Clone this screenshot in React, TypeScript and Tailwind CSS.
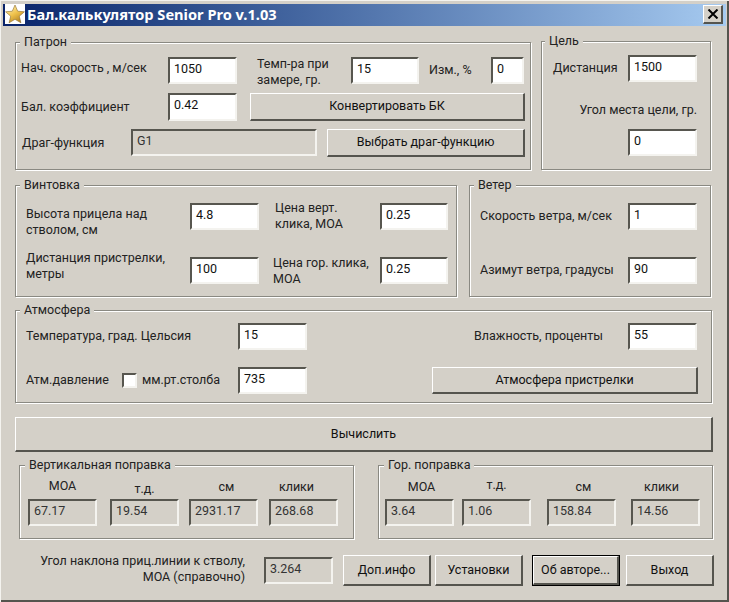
import React from "react";

const sunken = "border-2 border-t-[#57564f] border-l-[#57564f] border-b-[#f4f3ef] border-r-[#f4f3ef]";
const raised = "border border-t-white border-l-white border-r-2 border-b-2 border-r-[#55544e] border-b-[#55544e]";
const etched = "shadow-[inset_0_0_0_1px_#8a8982,1px_1px_0_#ffffff,inset_1px_1px_0_1px_#ffffff]";

function Field({ v, w = 69, h = 27, off = false, cls = "" }: { v: string; w?: number; h?: number; off?: boolean; cls?: string }) {
  return (
    <div
      className={`${sunken} shrink-0 pl-[4px] pt-[2px] leading-[16px] ${off ? "bg-[#d4d0c8] text-[#333]" : "bg-white text-[#111]"} ${cls}`}
      style={{ width: w, height: h }}
    >
      {v}
    </div>
  );
}

function Btn({ t, w, h = 27, cls = "" }: { t: string; w: number; h?: number; cls?: string }) {
  return (
    <div className={`${raised} shrink-0 flex items-center justify-center bg-[#d4d0c8] text-[#111] ${cls}`} style={{ width: w, height: h }}>
      {t}
    </div>
  );
}

function Group({ title, w, h, cls = "", children, lx = 5 }: { title: string; w: number; h: number; cls?: string; children: React.ReactNode; lx?: number }) {
  return (
    <div className={`relative shrink-0 ${etched} ${cls}`} style={{ width: w, height: h }}>
      <div className="absolute -top-[8px] bg-[#d4d0c8] px-[4px] leading-[16px] text-[#222]" style={{ left: lx }}>
        {title}
      </div>
      {children}
    </div>
  );
}

function Result({ label, v, lcls = "", cls = "" }: { label: string; v: string; lcls?: string; cls?: string }) {
  return (
    <div className={`w-[69px] shrink-0 ${cls}`}>
      <div className={`h-[16px] text-center leading-[16px] text-[#222] ${lcls}`}>{label}</div>
      <Field v={v} off cls="mt-[4px]" />
    </div>
  );
}

function Star() {
  return (
    <svg viewBox="0 0 20 20" className="h-[20px] w-[20px] shrink-0 bg-white">
      <defs>
        <linearGradient id="starFill" x1="0.2" y1="0" x2="0.8" y2="1">
          <stop offset="0" stopColor="#fff2b0" />
          <stop offset="0.5" stopColor="#eec04a" />
          <stop offset="1" stopColor="#a87a20" />
        </linearGradient>
      </defs>
      <path
        d="M10 1 L12.7 7.2 L19.4 7.8 L14.3 12.2 L15.9 18.8 L10 15.3 L4.1 18.8 L5.7 12.2 L0.6 7.8 L7.3 7.2 Z"
        fill="url(#starFill)"
        stroke="#8a6a2a"
        strokeWidth="0.6"
      />
    </svg>
  );
}

export default function App() {
  return (
    <div
      className="h-[602px] w-[729px] overflow-hidden bg-[#d4d0c8] pt-[4px] text-[12.5px] shadow-[inset_1px_1px_0_#f4f3ef,inset_-2px_-2px_0_#55544e]"
      style={{ fontFamily: "Roboto, Tahoma, sans-serif" }}
    >
      {/* title bar */}
      <div className="mx-[3px] flex h-[22px] items-start bg-gradient-to-r from-[#0a246a] to-[#a6caf0] pl-[2px]">
        <Star />
        <div className="ml-[2px] text-[14.6px] font-bold leading-[20px] text-white" style={{ fontFamily: '"Noto Sans", sans-serif' }}>
          Бал.калькулятор Senior Pro v.1.03
        </div>
        <div className={`${raised} ml-auto mr-[3px] mt-[1px] flex h-[19px] w-[20px] items-center justify-center bg-[#d4d0c8]`}>
          <svg viewBox="0 0 12 10" className="h-[10px] w-[12px]">
            <path d="M1.5 0.5 L10.5 9.5 M10.5 0.5 L1.5 9.5" stroke="#000" strokeWidth="2" />
          </svg>
        </div>
      </div>

      <div className="pl-[15px] pt-[16px]">
        {/* row 1 */}
        <div className="flex items-start">
          <Group title="Патрон" w={516} h={128}>
            <div className="pt-[15px]">
              <div className="flex h-[27px] items-center pl-[6px]">
                <div className="w-[147px] shrink-0 -translate-y-[2px] text-[#222]">Нач. скорость , м/сек</div>
                <Field v="1050" />
                <div className="ml-[20px] w-[94px] shrink-0 translate-y-[1px] leading-[16px] text-[#222]">
                  Темп-ра при
                  <br />
                  замере, гр.
                </div>
                <Field v="15" w={68} />
                <div className="ml-[10px] w-[62px] shrink-0 text-[#222]">Изм., %</div>
                <Field v="0" w={33} />
              </div>
              <div className="mt-[9px] flex h-[28px] items-center pl-[6px]">
                <div className="w-[147px] shrink-0 text-[#222]">Бал. коэффициент</div>
                <Field v="0.42" h={28} />
                <Btn t="Конвертировать БК" w={275} h={28} cls="ml-[13px]" />
              </div>
              <div className="mt-[8px] flex h-[28px] items-center pl-[7px]">
                <div className="w-[109px] shrink-0 text-[#222]">Драг-функция</div>
                <Field v="G1" w={186} off cls="self-start" />
                <Btn t="Выбрать драг-функцию" w={198} h={28} cls="ml-[10px]" />
              </div>
            </div>
          </Group>
          <Group title="Цель" w={170} h={129} cls="ml-[10px] -mt-px" lx={4}>
            <div className="pt-[14px]">
              <div className="flex items-center pl-[12px]">
                <div className="w-[75px] shrink-0 text-[#222]">Дистанция</div>
                <Field v="1500" />
              </div>
              <div className="mt-[20px] h-[16px] pr-[14px] text-right leading-[16px] text-[#222]">Угол места цели, гр.</div>
              <div className="mt-[11px] pl-[87px]">
                <Field v="0" />
              </div>
            </div>
          </Group>
        </div>

        {/* row 2 */}
        <div className="mt-[15px] flex items-start">
          <Group title="Винтовка" w={442} h={112}>
            <div className="pl-[11px] pt-[18px]">
              <div className="flex h-[27px] items-start">
                <div className="mt-[3px] w-[164px] shrink-0 leading-[16px] text-[#222]">
                  Высота прицела над
                  <br />
                  стволом, см
                </div>
                <Field v="4.8" />
                <div className="-mt-[3px] ml-[16px] w-[105px] shrink-0 leading-[16px] text-[#222]">
                  Цена верт.
                  <br />
                  клика, МОА
                </div>
                <Field v="0.25" w={68} />
              </div>
              <div className="mt-[27px] flex h-[27px] items-start">
                <div className="-mt-[7px] w-[164px] shrink-0 leading-[16px] text-[#222]">
                  Дистанция пристрелки,
                  <br />
                  метры
                </div>
                <Field v="100" />
                <div className="-mt-[2px] ml-[14px] w-[107px] shrink-0 leading-[16px] text-[#222]">
                  Цена гор. клика,
                  <br />
                  МОА
                </div>
                <Field v="0.25" w={68} />
              </div>
            </div>
          </Group>
          <Group title="Ветер" w={242} h={112} cls="ml-[12px]" lx={5}>
            <div className="pl-[11px] pt-[18px]">
              <div className="flex items-center">
                <div className="w-[148px] shrink-0 text-[#222]">Скорость ветра, м/сек</div>
                <Field v="1" />
              </div>
              <div className="mt-[27px] flex items-center">
                <div className="w-[148px] shrink-0 text-[#222]">Азимут ветра, градусы</div>
                <Field v="90" />
              </div>
            </div>
          </Group>
        </div>

        {/* row 3 */}
        <Group title="Атмосфера" w={697} h={93} cls="mt-[13px]">
          <div className="pl-[11px] pr-[15px] pt-[13px]">
            <div className="flex items-center">
              <div className="w-[212px] shrink-0 text-[#222]">Температура, град. Цельсия</div>
              <Field v="15" />
              <div className="ml-auto mr-[25px] text-[#222]">Влажность, проценты</div>
              <Field v="55" />
            </div>
            <div className="mt-[17px] flex items-center">
              <div className="w-[96px] shrink-0 text-[#222]">Атм.давление</div>
              <div className={`${sunken} h-[15px] w-[15px] shrink-0 bg-white`} />
              <div className="ml-[5px] w-[96px] shrink-0 text-[#222]">мм.рт.столба</div>
              <Field v="735" />
              <Btn t="Атмосфера пристрелки" w={266} cls="-mr-px ml-auto" />
            </div>
          </div>
        </Group>

        <Btn t="Вычислить" w={698} h={35} cls="mt-[14px]" />

        {/* results */}
        <div className="mt-[13px] flex items-start">
          <Group title="Вертикальная поправка" w={335} h={74} cls="ml-[4px]" lx={6}>
            <div className="flex pl-[9px] pt-[14px]">
              <Result label="МОА" v="67.17" lcls="-translate-y-[1px]" />
              <Result label="т.д." v="19.54" cls="ml-[13px]" lcls="translate-y-[2px]" />
              <Result label="см" v="2931.17" cls="ml-[10px]" lcls="translate-x-[3px]" />
              <Result label="клики" v="268.68" cls="ml-[11px]" lcls="-translate-x-[7px]" />
            </div>
          </Group>
          <Group title="Гор. поправка" w={335} h={74} cls="ml-[24px]" lx={6}>
            <div className="flex pl-[7px] pt-[14px]">
              <Result label="МОА" v="3.64" lcls="translate-x-[2px]" />
              <Result label="т.д." v="1.06" cls="ml-[8px]" lcls="-translate-y-[2px]" />
              <Result label="см" v="158.84" cls="ml-[16px]" lcls="translate-x-[2px]" />
              <Result label="клики" v="14.56" cls="ml-[15px]" lcls="-translate-x-[4px]" />
            </div>
          </Group>
        </div>

        {/* footer */}
        <div className="mt-[16px] flex items-start">
          <div className="mt-[-2px] w-[230px] shrink-0 text-right leading-[16px] text-[#222]">
            Угол наклона приц.линии к стволу,
            <br />
            МОА (справочно)
          </div>
          <Field v="3.264" off cls="ml-[19px] mt-[2px]" />
          <Btn t="Доп.инфо" w={88} h={31} cls="ml-[10px]" />
          <Btn t="Установки" w={88} h={31} cls="ml-[4px]" />
          <div className="ml-[9px] h-[31px] w-[88px] shrink-0 border border-black">
            <Btn t="Об авторе..." w={86} h={29} />
          </div>
          <Btn t="Выход" w={88} h={31} cls="ml-[6px]" />
        </div>
      </div>
    </div>
  );
}
